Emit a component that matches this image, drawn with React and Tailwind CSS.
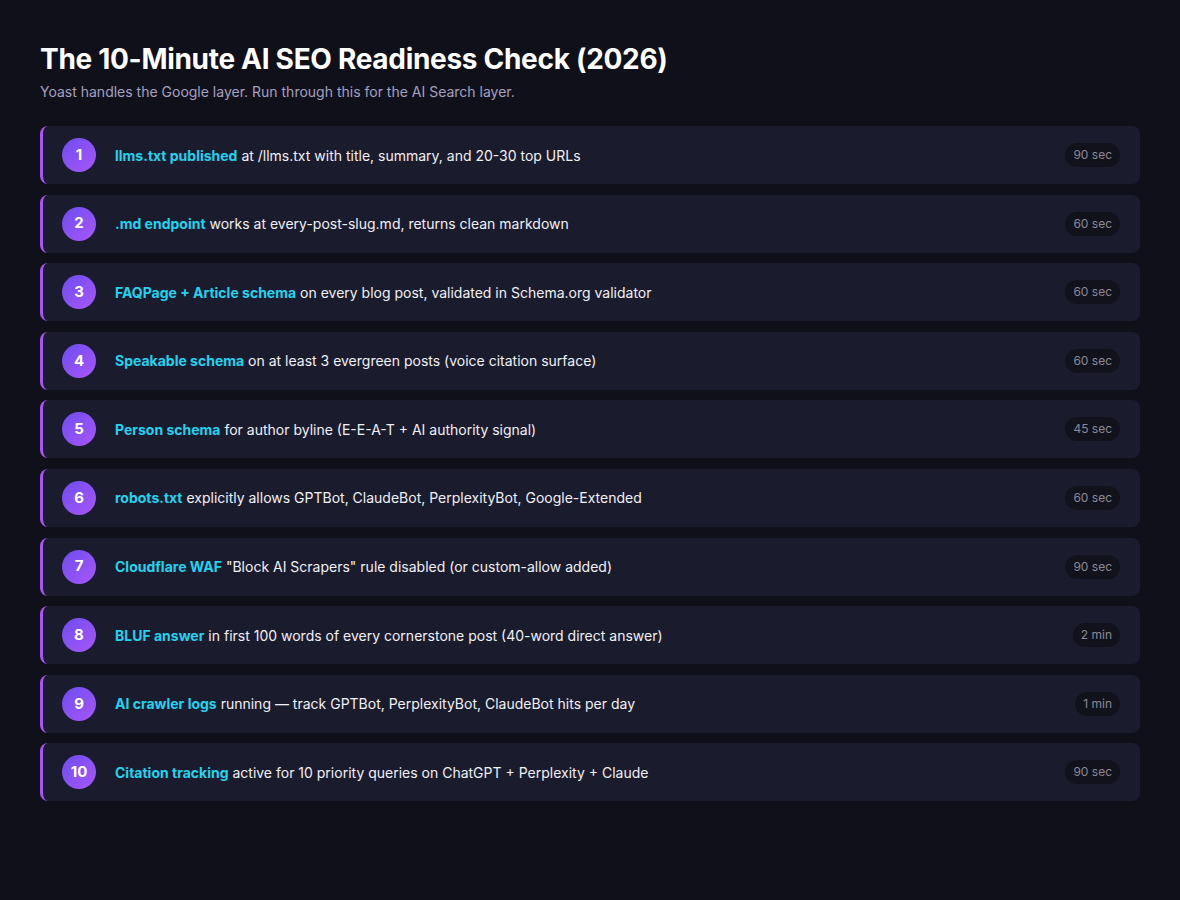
const items = [
  ['llms.txt published', 'at /llms.txt with title, summary, and 20-30 top URLs', '90 sec'],
  ['.md endpoint', 'works at every-post-slug.md, returns clean markdown', '60 sec'],
  ['FAQPage + Article schema', 'on every blog post, validated in Schema.org validator', '60 sec'],
  ['Speakable schema', 'on at least 3 evergreen posts (voice citation surface)', '60 sec'],
  ['Person schema', 'for author byline (E-E-A-T + AI authority signal)', '45 sec'],
  ['robots.txt', 'explicitly allows GPTBot, ClaudeBot, PerplexityBot, Google-Extended', '60 sec'],
  ['Cloudflare WAF', '"Block AI Scrapers" rule disabled (or custom-allow added)', '90 sec'],
  ['BLUF answer', 'in first 100 words of every cornerstone post (40-word direct answer)', '2 min'],
  ['AI crawler logs', 'running — track GPTBot, PerplexityBot, ClaudeBot hits per day', '1 min'],
  ['Citation tracking', 'active for 10 priority queries on ChatGPT + Perplexity + Claude', '90 sec'],
]

export default function App() {
  return (
    <div className="min-h-[900px] bg-[#10101a] px-10 pt-[42px] font-[Inter,sans-serif] text-white">
      <h1 className="text-[28px] font-bold leading-[34px] tracking-[-0.3px]">The 10-Minute AI SEO Readiness Check (2026)</h1>
      <p className="mt-[5px] text-[14px] text-[#a5a0c0]">Yoast handles the Google layer. Run through this for the AI Search layer.</p>
      <div className="mt-[24px] flex flex-col gap-[10.6px]">
        {items.map(([title, rest, time], i) => (
          <div key={i} className="flex h-[58px] items-center rounded-lg border-l-[3px] border-[#a855f7] bg-[#1b1b2e] pl-[19px] pr-5">
            <div className="flex h-[34px] w-[34px] shrink-0 items-center justify-center rounded-full bg-gradient-to-br from-[#6d4cf0] to-[#a855f7] text-[15px] font-bold">{i + 1}</div>
            <div className="ml-[19px] flex-1 text-[14px]">
              <span className="font-bold text-[#22d3ee]">{title}</span> <span className="text-[#f0f0f5]">{rest}</span>
            </div>
            <span className="rounded-full bg-[#12121c] px-2 py-[3px] text-[12px] text-[#8a8a9a]">{time}</span>
          </div>
        ))}
      </div>
    </div>
  )
}
